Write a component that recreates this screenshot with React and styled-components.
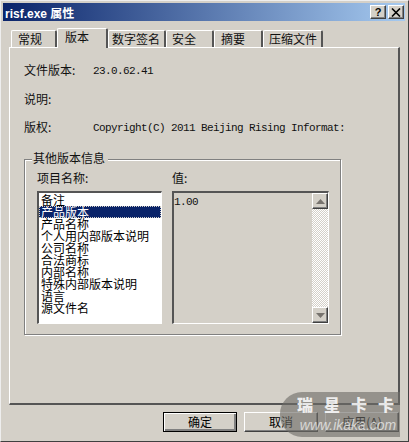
import React from "react";
import styled, { createGlobalStyle } from "styled-components";

const Global = createGlobalStyle`
  html, body { margin: 0; padding: 0; background: #d4d0c8; }
  * { box-sizing: border-box; }
`;
const CJK = `"Noto Sans CJK SC", "Liberation Sans", sans-serif`;
const MONO = `"Liberation Mono", "Noto Sans CJK SC", monospace`;
const raised = `border: 1px solid; border-color: #fff #404040 #404040 #fff; box-shadow: inset -1px -1px 0 #808080;`;
const sunken = `border-style: solid; border-width: 2px 1px 1px 2px; border-color: #555 #fff #fff #555;`;

const Dialog = styled.div`
  position: relative; width: 409px; height: 442px; background: #d4d0c8; overflow: hidden;
  padding: 2px 3px 0 2px;
  border-left: 1px solid #eee; border-top: 1px solid #eee;
  border-right: 1px solid #404040; border-bottom: 1px solid #404040;
  font: 12px ${CJK}; color: #111;
`;
const TitleBar = styled.div`
  height: 18px; display: flex; align-items: center; padding: 0 1px 0 2px;
  background: linear-gradient(90deg, #0a246a, #a6caf0);
  color: #fff; font: bold 12px "Liberation Sans", ${CJK};
`;
const TitleText = styled.span`flex: 1;`;
const CaptionBtn = styled.button`
  width: 16px; height: 14px; padding: 0; margin-left: ${p => p.$gap}px; ${raised};
  background: #d4d0c8; color: #000; display: flex; align-items: center; justify-content: center;
  font: bold 11px "Liberation Sans", sans-serif;
`;
const TabRow = styled.div`
  display: flex; height: 19px; margin: 7px 0 0 8px; align-items: flex-end; position: relative; z-index: 1;
`;
const Tab = styled.div`
  width: ${p => p.$w}px; height: ${p => p.$active ? 20 : 17}px; margin-bottom: ${p => p.$active ? -1 : 0}px;
  padding-left: ${p => p.$pad}px;
  background: #d4d0c8;
  border-top: 1px solid #fff; border-left: 1px solid #fff;
  border-right: 2px solid #555; border-top-left-radius: 2px; border-top-right-radius: 2px;
  font-size: 12px; line-height: ${p => p.$active ? 16 : 15}px; white-space: nowrap;
`;
const Panel = styled.div`
  width: 391px; height: 358px; margin-left: 6px; padding: 15px 0 0 14px;
  border-top: 1px solid #fff; border-left: 1px solid #fff;
  border-right: 2px solid #555; border-bottom: 2px solid #555;
`;
const InfoRow = styled.div`
  display: flex; height: 14px; margin-bottom: ${p => p.$mb}px; align-items: flex-start;
`;
const InfoLabel = styled.div`width: 69px; font-size: 12px; line-height: 14px; white-space: nowrap;`;
const InfoValue = styled.div`font: 11px/14px ${MONO}; letter-spacing: -0.6px; padding-top: 1px; white-space: nowrap;`;
const Group = styled.fieldset`
  margin: 0; width: 317px; height: 176px; padding: 0 11px 0 12px; position: relative;
  border: 1px solid #808080; box-shadow: 1px 1px 0 #fff, inset 1px 1px 0 #fff;
  display: block; min-width: 0;
`;
const GroupTitle = styled.div`
  position: absolute; top: -9px; left: 7px; padding: 0 3px 0 1px; background: #d4d0c8;
  font-size: 12px; line-height: 14px;
`;
const Columns = styled.div`display: flex; gap: 10px; padding-top: 11px;`;
const Column = styled.div`width: ${p => p.$w}px; display: flex; flex-direction: column;`;
const ColLabel = styled.div`height: 20px; line-height: 14px; font-size: 12px;`;
const List = styled.div`
  height: 133px; background: #fff; ${sunken}; padding: 1px 0 0; overflow: hidden;
`;
const Item = styled.div`
  height: 12px; line-height: 12px; font-size: 12px; padding-left: 2px; white-space: nowrap;
  background: ${p => p.$sel ? "#0a246a" : "transparent"};
  color: ${p => p.$sel ? "#fff" : "#000"};
  outline: ${p => p.$sel ? "1px dotted #d4d0c8" : "none"}; outline-offset: -1px;
`;
const ValueBox = styled.div`
  height: 133px; ${sunken}; display: flex; justify-content: space-between;
`;
const ValueText = styled.div`font: 11px/14px ${MONO}; letter-spacing: -0.6px; padding: 2px 0 0;`;
const ScrollBar = styled.div`
  width: 16px; display: flex; flex-direction: column; justify-content: space-between;
  background: repeating-conic-gradient(#fff 0 25%, #d4d0c8 0 50%) 0 0 / 2px 2px;
`;
const ScrollBtn = styled.div`
  height: 16px; background: #d4d0c8; ${raised}; display: flex; align-items: center; justify-content: center;
`;
const Footer = styled.div`
  display: flex; justify-content: flex-end; gap: 7px; margin: 7px 0 0 0; padding-right: 6px;
`;
const Button = styled.button`
  width: 74px; height: 20px; padding: 0; background: #d4d0c8; font: 12px/16px ${CJK}; color: #000;
  border: 1px solid; border-color: #fff #404040 #404040 #fff;
  ${p => p.$default && `outline: 1px solid #000; outline-offset: -1px; box-shadow: inset 1px 1px 0 #fff, inset -2px -2px 0 #808080;`}
  ${p => !p.$default && `box-shadow: inset -1px -1px 0 #808080;`}
`;
const Watermark = styled.div`
  position: absolute; left: 279px; top: 391px; width: 120px; height: 45px;
  border-radius: 22px 0 0 22px; background: rgba(110,108,104,.62); color: #fff;
  display: flex; flex-direction: column; align-items: center;
`;
const WmTitle = styled.div`
  font: 900 16px/18px ${CJK}; letter-spacing: 11px; color: rgba(255,255,255,.85); margin: 3px 0 0 22px; white-space: nowrap;
`;
const WmUrl = styled.div`
  font: italic 14px/16px "Liberation Sans", sans-serif; color: rgba(255,255,255,.65); margin: 4px 0 0 16px; white-space: nowrap;
`;

const Arrow = ({ down }) => (
  <svg width="9" height="5" viewBox="0 0 9 5"><path d={down ? "M0 0H9L4.5 5Z" : "M0 5H9L4.5 0Z"} fill="#77736e" /></svg>
);

const tabs = [["常规", 46, 0, 6], ["版本", 51, 1, 7], ["数字签名", 58, 0, 3], ["安全", 48, 0, 5], ["摘要", 49, 0, 6], ["压缩文件", 60, 0, 5]];
const items = ["备注", "产品版本", "产品名称", "个人用内部版本说明", "公司名称", "合法商标", "内部名称", "特殊内部版本说明", "语言", "源文件名"];

export default function App() {
  return (
    <>
      <Global />
      <Dialog>
        <TitleBar>
          <TitleText>risf.exe 属性</TitleText>
          <CaptionBtn $gap={0}>?</CaptionBtn>
          <CaptionBtn $gap={2}>
            <svg width="10" height="9" viewBox="0 0 10 9"><path d="M1 0.5L9 8.5M9 0.5L1 8.5" stroke="#000" strokeWidth="1.6" /></svg>
          </CaptionBtn>
        </TitleBar>
        <TabRow>
          {tabs.map(([t, w, a, pad]) => <Tab key={t} $w={w} $active={!!a} $pad={pad}>{t}</Tab>)}
        </TabRow>
        <Panel>
          <InfoRow $mb={15}><InfoLabel>文件版本:</InfoLabel><InfoValue>23.0.62.41</InfoValue></InfoRow>
          <InfoRow $mb={14}><InfoLabel>说明:</InfoLabel></InfoRow>
          <InfoRow $mb={25}><InfoLabel>版权:</InfoLabel><InfoValue>Copyright(C) 2011 Beijing Rising Informat:</InfoValue></InfoRow>
          <Group>
            <GroupTitle>其他版本信息</GroupTitle>
            <Columns>
              <Column $w={125}>
                <ColLabel>项目名称:</ColLabel>
                <List>{items.map((t, i) => <Item key={t} $sel={i === 1}>{t}</Item>)}</List>
              </Column>
              <Column $w={157}>
                <ColLabel>值:</ColLabel>
                <ValueBox>
                  <ValueText>1.00</ValueText>
                  <ScrollBar>
                    <ScrollBtn><Arrow /></ScrollBtn>
                    <ScrollBtn><Arrow down /></ScrollBtn>
                  </ScrollBar>
                </ValueBox>
              </Column>
            </Columns>
          </Group>
        </Panel>
        <Footer>
          <Button $default>确定</Button>
          <Button>取消</Button>
          <Button>应用(A)</Button>
        </Footer>
        <Watermark>
          <WmTitle>瑞星卡卡</WmTitle>
          <WmUrl>www.ikaka.com</WmUrl>
        </Watermark>
      </Dialog>
    </>
  );
}
